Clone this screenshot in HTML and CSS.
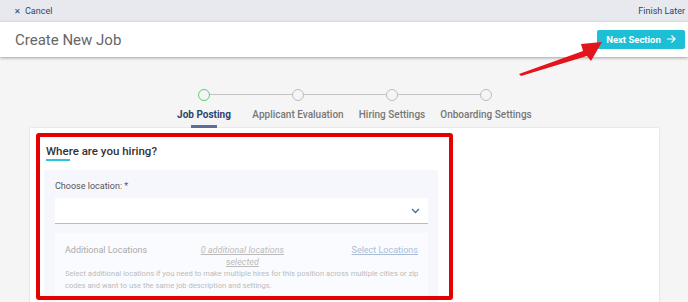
FILE: index.html
```html
<!DOCTYPE HTML>
<html>
	<head>
		<meta charset="utf-8">
		<title>Create New Job</title>
		<link rel="stylesheet" href="styles.css">
	</head>
	<body>
		<div class="topbar">
			<a class="cancel" href="#"><span class="x">&#x2715;</span>Cancel</a>
			<a class="finish" href="#">Finish Later</a>
		</div>
		<div class="header">
			<h1 class="title">Create New Job</h1>
			<button class="next-button">Next Section
				<svg width="10" height="10" viewBox="0 0 10 10"><path d="M1 5h8M5.5 1.5L9 5l-3.5 3.5" fill="none" stroke="#fff" stroke-width="1.2"/></svg>
			</button>
		</div>
		<div class="main">
			<div class="stepper">
				<div class="step active">
					<span class="dot"></span>
					<span class="label">Job Posting</span>
				</div>
				<div class="step">
					<span class="dot"></span>
					<span class="label">Applicant Evaluation</span>
				</div>
				<div class="step">
					<span class="dot"></span>
					<span class="label">Hiring Settings</span>
				</div>
				<div class="step">
					<span class="dot"></span>
					<span class="label">Onboarding Settings</span>
				</div>
			</div>
			<div class="card">
				<h2 class="section-title">Where are you hiring?</h2>
				<div class="panel">
					<label class="field-label">Choose location: *</label>
					<div class="select">
						<svg width="9" height="6" viewBox="0 0 9 6"><path d="M1 1l3.5 3.5L8 1" fill="none" stroke="#4a6a9a" stroke-width="1.3"/></svg>
					</div>
					<div class="additional">
						<div class="additional-row">
							<span class="add-label">Additional Locations</span>
							<span class="add-count">0 additional locations selected</span>
							<a class="add-link" href="#">Select Locations</a>
						</div>
						<p class="add-help">Select additional locations if you need to make multiple hires for this position across multiple cities or zip codes and want to use the same job description and settings.</p>
					</div>
				</div>
			</div>
		</div>
		<div class="highlight"></div>
		<svg class="arrow" width="688" height="302" viewBox="0 0 688 302">
			<polygon points="519,74 583,51 581,44 602,42 591,61 587,56 521,76" fill="#e3141b"/>
		</svg>
	</body>
</html>
```

FILE: styles.css
```css
body {
	margin: 0;
	width: 688px;
	height: 302px;
	overflow: hidden;
	font-family: Roboto, "Liberation Sans", sans-serif;
	background: #f5f5f5;
	position: relative;
}
a {
	text-decoration: none;
}
.topbar {
	height: 22px;
	background: #e8e9ee;
	display: flex;
	align-items: center;
	justify-content: space-between;
	padding: 0 3px 0 14px;
	font-size: 9px;
}
.topbar a {
	color: #2d4470;
}
.cancel .x {
	font-size: 8px;
	margin-right: 4px;
}
.header {
	height: 35px;
	background: #fff;
	display: flex;
	align-items: center;
	justify-content: space-between;
	padding: 0 3px 0 15px;
	box-shadow: 0 1px 3px rgba(0, 0, 0, 0.35);
	position: relative;
}
.title {
	margin: 0;
	font-size: 15px;
	font-weight: 400;
	color: #666;
}
.next-button {
	width: 88px;
	height: 19px;
	margin-top: -1px;
	border: none;
	border-radius: 2px;
	background: #1cbfd6;
	color: #fff;
	font-family: Roboto, "Liberation Sans", sans-serif;
	font-size: 9.5px;
	font-weight: 700;
	display: flex;
	align-items: center;
	justify-content: center;
	gap: 5px;
	padding: 0;
}
.main {
	padding: 32px 0 0 30px;
}
.stepper {
	display: flex;
	margin-left: 127px;
	height: 39px;
}
.step {
	width: 94px;
	position: relative;
	display: flex;
	flex-direction: column;
	align-items: center;
}
.step + .step:before {
	content: "";
	position: absolute;
	left: -47px;
	top: 5px;
	width: 94px;
	height: 1px;
	background: #c4c4c4;
}
.dot {
	width: 10px;
	height: 10px;
	border: 1px solid #bdbdbd;
	border-radius: 50%;
	background: #f5f5f5;
	position: relative;
	z-index: 1;
}
.step.active .dot {
	border-color: #5ccf6a;
}
.label {
	margin-top: 8px;
	white-space: nowrap;
	font-size: 10px;
	font-weight: 500;
	color: #777;
}
.step.active .label {
	font-weight: 700;
	color: #2d4470;
}
.step.active:after {
	content: "";
	position: absolute;
	top: 36px;
	left: 34px;
	width: 26px;
	height: 3px;
	background: #5a7099;
}
.card {
	width: 629px;
	height: 200px;
	background: #fff;
	box-shadow: 0 0 2px rgba(0, 0, 0, 0.15);
	padding: 16px 0 0 14px;
	box-sizing: border-box;
}
.section-title {
	margin: 0 0 0 2px;
	font-size: 11.5px;
	line-height: 14px;
	font-weight: 500;
	color: #333;
	padding-bottom: 3px;
	position: relative;
}
.section-title:after {
	content: "";
	position: absolute;
	left: 0;
	bottom: 0;
	width: 24px;
	height: 2px;
	background: #2bc4d8;
}
.panel {
	margin-top: 9px;
	width: 394px;
	background: #f6f7fc;
	padding: 11px 10px 0 11px;
	box-sizing: border-box;
	height: 140px;
}
.field-label {
	display: block;
	font-size: 9px;
	line-height: 11px;
	color: #555;
}
.select {
	margin-top: 6px;
	height: 25px;
	background: #fff;
	border-bottom: 1px solid #bbb;
	display: flex;
	align-items: center;
	justify-content: flex-end;
	padding-right: 8px;
}
.additional {
	margin-top: 9px;
	background: #fafbfe;
	padding: 11px 8px 0 10px;
	height: 80px;
	color: #aaa;
}
.additional-row {
	display: flex;
	justify-content: space-between;
	align-items: flex-start;
	font-size: 9px;
	line-height: 12px;
	padding-right: 2px;
}
.add-count {
	width: 90px;
	text-align: center;
	font-style: italic;
	text-decoration: underline;
	color: #bbb;
	margin-right: 14px;
}
.add-link {
	color: #a9bcd6;
	text-decoration: underline;
}
.add-help {
	margin: 0;
	font-size: 7.6px;
	line-height: 12px;
	color: #bbb;
}
.highlight {
	position: absolute;
	left: 36px;
	top: 133px;
	width: 409px;
	height: 159px;
	border: 4px solid #e30000;
	border-radius: 3px;
}
.arrow {
	position: absolute;
	left: 0;
	top: 0;
}
```
